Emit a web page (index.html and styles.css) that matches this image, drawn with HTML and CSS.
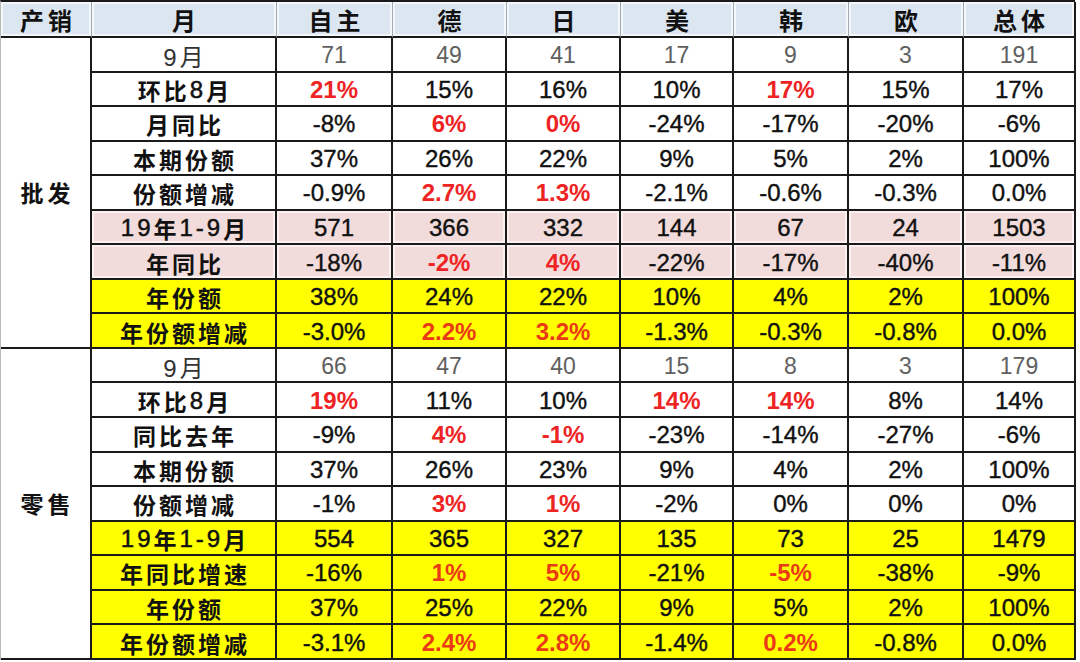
FILE: index.html
```html
<!DOCTYPE html>
<html lang="zh">
<head>
<meta charset="utf-8">
<link rel="stylesheet" href="styles.css">
<title>产销</title>
</head>
<body>
<div class="sheet">
  <div class="h">产销</div><div class="h">月</div><div class="h">自主</div><div class="h">德</div><div class="h">日</div><div class="h">美</div><div class="h">韩</div><div class="h">欧</div><div class="h last">总体</div>

  <div class="grp g1">批发</div>
  <div class="lb lt">9月</div><div class="c gr">71</div><div class="c gr">49</div><div class="c gr">41</div><div class="c gr">17</div><div class="c gr">9</div><div class="c gr">3</div><div class="c gr">191</div>
  <div class="lb">环比<span class="n">8</span>月</div><div class="c r">21%</div><div class="c">15%</div><div class="c">16%</div><div class="c">10%</div><div class="c r">17%</div><div class="c">15%</div><div class="c">17%</div>
  <div class="lb">月同比</div><div class="c">-8%</div><div class="c r">6%</div><div class="c r">0%</div><div class="c">-24%</div><div class="c">-17%</div><div class="c">-20%</div><div class="c">-6%</div>
  <div class="lb">本期份额</div><div class="c">37%</div><div class="c">26%</div><div class="c">22%</div><div class="c">9%</div><div class="c">5%</div><div class="c">2%</div><div class="c">100%</div>
  <div class="lb">份额增减</div><div class="c">-0.9%</div><div class="c r">2.7%</div><div class="c r">1.3%</div><div class="c">-2.1%</div><div class="c">-0.6%</div><div class="c">-0.3%</div><div class="c">0.0%</div>
  <div class="lb pk"><span class="n">19</span>年<span class="n">1-9</span>月</div><div class="c pk">571</div><div class="c pk">366</div><div class="c pk">332</div><div class="c pk">144</div><div class="c pk">67</div><div class="c pk">24</div><div class="c pk">1503</div>
  <div class="lb pk">年同比</div><div class="c pk">-18%</div><div class="c pk r">-2%</div><div class="c pk r">4%</div><div class="c pk">-22%</div><div class="c pk">-17%</div><div class="c pk">-40%</div><div class="c pk">-11%</div>
  <div class="lb yl">年份额</div><div class="c yl">38%</div><div class="c yl">24%</div><div class="c yl">22%</div><div class="c yl">10%</div><div class="c yl">4%</div><div class="c yl">2%</div><div class="c yl">100%</div>
  <div class="lb yl">年份额增减</div><div class="c yl">-3.0%</div><div class="c yl o">2.2%</div><div class="c yl o">3.2%</div><div class="c yl">-1.3%</div><div class="c yl">-0.3%</div><div class="c yl">-0.8%</div><div class="c yl">0.0%</div>

  <div class="grp g2">零售</div>
  <div class="lb lt">9月</div><div class="c gr">66</div><div class="c gr">47</div><div class="c gr">40</div><div class="c gr">15</div><div class="c gr">8</div><div class="c gr">3</div><div class="c gr">179</div>
  <div class="lb">环比<span class="n">8</span>月</div><div class="c r">19%</div><div class="c">11%</div><div class="c">10%</div><div class="c r">14%</div><div class="c r">14%</div><div class="c">8%</div><div class="c">14%</div>
  <div class="lb">同比去年</div><div class="c">-9%</div><div class="c r">4%</div><div class="c r">-1%</div><div class="c">-23%</div><div class="c">-14%</div><div class="c">-27%</div><div class="c">-6%</div>
  <div class="lb">本期份额</div><div class="c">37%</div><div class="c">26%</div><div class="c">23%</div><div class="c">9%</div><div class="c">4%</div><div class="c">2%</div><div class="c">100%</div>
  <div class="lb">份额增减</div><div class="c">-1%</div><div class="c r">3%</div><div class="c r">1%</div><div class="c">-2%</div><div class="c">0%</div><div class="c">0%</div><div class="c">0%</div>
  <div class="lb yl"><span class="n">19</span>年<span class="n">1-9</span>月</div><div class="c yl">554</div><div class="c yl">365</div><div class="c yl">327</div><div class="c yl">135</div><div class="c yl">73</div><div class="c yl">25</div><div class="c yl">1479</div>
  <div class="lb yl">年同比增速</div><div class="c yl">-16%</div><div class="c yl o">1%</div><div class="c yl o">5%</div><div class="c yl">-21%</div><div class="c yl o">-5%</div><div class="c yl">-38%</div><div class="c yl">-9%</div>
  <div class="lb yl">年份额</div><div class="c yl">37%</div><div class="c yl">25%</div><div class="c yl">22%</div><div class="c yl">9%</div><div class="c yl">5%</div><div class="c yl">2%</div><div class="c yl">100%</div>
  <div class="lb yl">年份额增减</div><div class="c yl">-3.1%</div><div class="c yl o">2.4%</div><div class="c yl o">2.8%</div><div class="c yl">-1.4%</div><div class="c yl o">0.2%</div><div class="c yl">-0.8%</div><div class="c yl">0.0%</div>
</div>
</body>
</html>
```

FILE: styles.css
```css
html, body {
  margin: 0;
  padding: 0;
  background: #ffffff;
}

.sheet {
  width: 1075px;
  display: grid;
  grid-template-columns: 91px 185px 116px 114px 114px 113px 115px 115px 112px;
  grid-template-rows: 36px repeat(18, 34.55px);
  border-top: 2px solid #1a1a1a;
  border-left: 1px solid #bbbbbb;
  box-sizing: border-box;
  font-family: "Liberation Sans", "Noto Sans CJK SC", sans-serif;
  color: #111111;
}

.sheet > div {
  display: flex;
  align-items: center;
  justify-content: center;
  box-sizing: border-box;
  border-right: 2px solid #1a1a1a;
  border-bottom: 2px solid #1a1a1a;
  background: #ffffff;
  white-space: nowrap;
}

.h {
  background: #dce6f0 !important;
  box-shadow: inset 0 0 0 2px #f4f7fa;
  border-right: 1px solid #a0a8b0 !important;
  font-family: "Noto Sans CJK SC", sans-serif;
  font-weight: 700;
  font-size: 24px;
  letter-spacing: 4px;
  padding-left: 4px;
}

.h.last {
  border-right: 2px solid #1a1a1a !important;
}

.grp {
  font-family: "Noto Sans CJK SC", sans-serif;
  font-weight: 700;
  font-size: 23px;
  letter-spacing: 4px;
  padding-left: 4px;
  grid-column: 1;
}

.g1 {
  grid-row: 2 / span 9;
}

.g2 {
  grid-row: 11 / span 9;
}

.lb {
  font-family: "Liberation Sans", "Noto Sans CJK SC", sans-serif;
  font-weight: 700;
  font-size: 23px;
  letter-spacing: 3px;
  padding-left: 3px;
  padding-top: 2px;
}

.lb .n {
  font-weight: 400;
  font-size: 24px;
  -webkit-text-stroke: 0.5px #111111;
}

.lb.lt {
  font-weight: 400;
  color: #333333;
  font-size: 24px;
}

.c {
  font-size: 24px;
  padding-top: 2px;
  -webkit-text-stroke: 0.4px #111111;
}

.gr {
  color: #606060;
  -webkit-text-stroke: 0;
  font-size: 23px;
}

.r {
  color: #ee2424;
  font-weight: 700;
  -webkit-text-stroke: 0;
}

.o {
  color: #ea3a16;
  font-weight: 700;
  -webkit-text-stroke: 0;
}

.pk {
  background: #f2dcdb !important;
  box-shadow: inset 0 0 0 2px #fbf1f0;
}

.yl {
  background: #ffff00 !important;
}
```
